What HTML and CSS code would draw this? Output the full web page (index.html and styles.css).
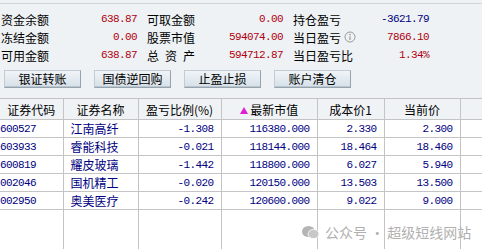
FILE: index.html
```html
<!DOCTYPE html>
<html lang="zh">
<head>
  <meta charset="UTF-8">
  <title>资金持仓</title>
  <link rel="stylesheet" href="styles.css">
</head>
<body>
  <div class="panel">
    <div class="info">
      <div class="item"><span class="label">资金余额</span><span class="num red">638.87</span></div>
      <div class="item"><span class="label">可取金额</span><span class="num red">0.00</span></div>
      <div class="item"><span class="label">持仓盈亏</span><span class="num navy">-3621.79</span></div>
      <div class="item"><span class="label">冻结金额</span><span class="num red">0.00</span></div>
      <div class="item"><span class="label">股票市值</span><span class="num red">594074.00</span></div>
      <div class="item">
        <span class="label">当日盈亏
          <svg class="tip" width="12" height="12" viewBox="0 0 12 12">
            <circle cx="6" cy="6" r="5" fill="none" stroke="#9a9a9a" stroke-width="1"/>
            <circle cx="6" cy="3.6" r="0.8" fill="#9a9a9a"/>
            <line x1="6" y1="5.2" x2="6" y2="9" stroke="#9a9a9a" stroke-width="1.2"/>
          </svg>
        </span>
        <span class="num red">7866.10</span>
      </div>
      <div class="item"><span class="label">可用金额</span><span class="num red">638.87</span></div>
      <div class="item"><span class="label">总&ensp;资&ensp;产</span><span class="num red">594712.87</span></div>
      <div class="item"><span class="label">当日盈亏比</span><span class="num red">1.34%</span></div>
    </div>
    <div class="actions">
      <button class="btn">银证转账</button>
      <button class="btn">国债逆回购</button>
      <button class="btn">止盈止损</button>
      <button class="btn">账户清仓</button>
    </div>
  </div>

  <table class="grid">
    <colgroup>
      <col style="width:63px"><col style="width:75px"><col style="width:83px"><col style="width:96px">
      <col style="width:67px"><col style="width:76px"><col style="width:22px">
    </colgroup>
    <thead>
      <tr>
        <th>证券代码</th>
        <th>证券名称</th>
        <th>盈亏比例(%)</th>
        <th><svg class="sort" width="8" height="7" viewBox="0 0 8 7"><polygon points="4,0 8,7 0,7" fill="#e020d0"/></svg> 最新市值</th>
        <th>成本价1</th>
        <th>当前价</th>
        <th></th>
      </tr>
    </thead>
    <tbody>
      <tr><td class="num code">600527</td><td class="name">江南高纤</td><td class="num r">-1.308</td><td class="num r">116380.000</td><td class="num r">2.330</td><td class="num r">2.300</td><td></td></tr>
      <tr><td class="num code">603933</td><td class="name">睿能科技</td><td class="num r">-0.021</td><td class="num r">118144.000</td><td class="num r">18.464</td><td class="num r">18.460</td><td></td></tr>
      <tr><td class="num code">600819</td><td class="name">耀皮玻璃</td><td class="num r">-1.442</td><td class="num r">118800.000</td><td class="num r">6.027</td><td class="num r">5.940</td><td></td></tr>
      <tr><td class="num code">002046</td><td class="name">国机精工</td><td class="num r">-0.020</td><td class="num r">120150.000</td><td class="num r">13.503</td><td class="num r">13.500</td><td></td></tr>
      <tr><td class="num code">002950</td><td class="name">奥美医疗</td><td class="num r">-0.242</td><td class="num r">120600.000</td><td class="num r">9.022</td><td class="num r">9.000</td><td></td></tr>
      <tr class="filler"><td></td><td></td><td></td><td></td><td></td><td></td><td></td></tr>
    </tbody>
  </table>

  <div class="watermark">
    <svg width="17" height="13" viewBox="0 0 17 13">
      <ellipse cx="6.5" cy="5.5" rx="6.5" ry="5.5" fill="#b5b5b5"/>
      <ellipse cx="11.5" cy="8" rx="5.5" ry="4.6" fill="#c8c8c8" stroke="#fff" stroke-width="0.8"/>
    </svg>
    <span>公众号 · 超级短线网站</span>
  </div>
</body>
</html>
```

FILE: styles.css
```css
body {
  margin: 0;
  width: 482px;
  height: 249px;
  overflow: hidden;
  position: relative;
  background: #eef2f5;
  font-family: "Noto Sans CJK SC", sans-serif;
  font-size: 12px;
  color: #000;
}
.panel {
  margin-top: 3px;
  border-top: 1px solid #cfd5da;
  padding: 6px 0 10px 1px;
}
.info {
  display: grid;
  grid-template-columns: repeat(3, 136px);
  column-gap: 10px;
}
.item {
  display: flex;
  justify-content: space-between;
  align-items: center;
  height: 18px;
  white-space: nowrap;
}
.label {
  display: flex;
  align-items: center;
}
.tip {
  margin-left: 3px;
}
.num {
  font-family: "Liberation Mono", monospace;
  font-size: 11px;
  letter-spacing: -0.6px;
}
.red {
  color: #b0000e;
}
.navy {
  color: #000080;
}
.actions {
  display: flex;
  gap: 13px;
  padding-left: 3px;
  margin-top: 6px;
}
.btn {
  width: 77px;
  height: 18px;
  padding: 0;
  font-family: "Noto Sans CJK SC", sans-serif;
  font-size: 12px;
  line-height: 16px;
  color: #000;
  background: linear-gradient(#f0f4f8, #d6e0e8);
  border: 1px solid #97a3ad;
  border-top-color: #c3ccd4;
  border-left-color: #c3ccd4;
  box-shadow: inset 0 -1px #bac6d0;
}
.grid {
  border-collapse: collapse;
  table-layout: fixed;
  width: 482px;
  background: #fff;
}
.grid th {
  height: 20px;
  padding: 0;
  font-weight: normal;
  background: #f0f3f6;
  border: 1px solid #c4c4c4;
  white-space: nowrap;
  overflow: hidden;
}
.grid td {
  height: 16px;
  padding: 0 7px;
  color: #000080;
  border-left: 1px solid #c4c4c4;
  border-right: 1px solid #c4c4c4;
  border-bottom: 1px solid #c4c4c4;
  white-space: nowrap;
  overflow: hidden;
}
.grid th:first-child,
.grid td:first-child {
  border-left: none;
}
.grid th:last-child,
.grid td:last-child {
  border-right: none;
}
.grid td.code {
  padding-left: 0;
}
.grid td.r {
  text-align: right;
}
.sort {
  vertical-align: 1px;
}
.grid .filler td {
  height: 43px;
  border-bottom: none;
}
.watermark {
  position: absolute;
  left: 302px;
  top: 222px;
  display: flex;
  align-items: center;
  gap: 6px;
  font-size: 14px;
  color: #b0b0b0;
}
```
